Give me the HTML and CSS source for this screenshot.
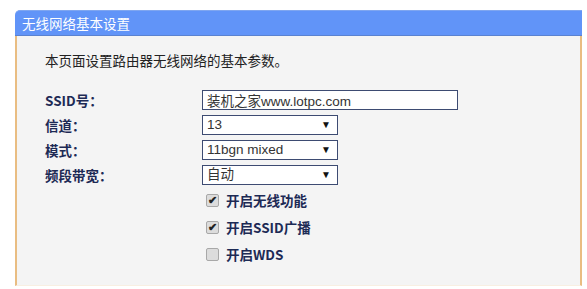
FILE: index.html
```html
<!DOCTYPE html>
<html lang="zh-CN">
<head>
    <meta charset="UTF-8">
    <title>无线网络基本设置</title>
    <link rel="stylesheet" href="styles.css">
</head>
<body>
    <div class="panel">
        <div class="panel-title">无线网络基本设置</div>
        <div class="panel-body">
            <p class="intro">本页面设置路由器无线网络的基本参数。</p>

            <div class="form-row">
                <label>SSID号：</label>
                <input class="text-input" type="text" value="装机之家www.lotpc.com">
            </div>
            <div class="form-row">
                <label>信道：</label>
                <div class="select-box">13<span class="arrow">▼</span></div>
            </div>
            <div class="form-row">
                <label>模式：</label>
                <div class="select-box">11bgn mixed<span class="arrow">▼</span></div>
            </div>
            <div class="form-row">
                <label>频段带宽：</label>
                <div class="select-box">自动<span class="arrow">▼</span></div>
            </div>

            <div class="checks">
                <label class="check"><span class="box checked"></span>开启无线功能</label>
                <label class="check"><span class="box checked"></span>开启SSID广播</label>
                <label class="check"><span class="box"></span>开启WDS</label>
            </div>
        </div>
    </div>
</body>
</html>
```

FILE: styles.css
```css
body {
    margin: 0;
    padding: 10px 5px 0 15px;
    background: #fff;
    font-family: "Noto Sans CJK SC", "Liberation Sans", sans-serif;
    font-size: 13.5px;
    color: #1d2a55;
}
.panel {
    width: 567px;
}
.panel-title {
    height: 26px;
    line-height: 25px;
    padding-left: 7px;
    background: #6194f8;
    border-top: 1px solid #7fa6f0;
    border-bottom: 1px solid #5a82d0;
    border-radius: 5px 0 0 0;
    color: #fff;
    font-size: 13.5px;
    box-sizing: border-box;
}
.panel-body {
    height: 250px;
    background: #f4f4f4;
    border-left: 2px solid #e9bd82;
    border-right: 2px solid #e9bd82;
    border-bottom: 1px solid #f8efe2;
    padding: 15px 0 0 28px;
    box-sizing: border-box;
}
.intro {
    margin: 0 0 18px;
    line-height: 18px;
    color: #222;
}
.form-row {
    display: flex;
    align-items: center;
    height: 25px;
}
.form-row label {
    width: 157px;
    font-weight: bold;
}
.text-input {
    width: 256px;
    height: 20px;
    margin: 0;
    padding: 0 4px;
    border: 1px solid #3d4b72;
    background: #fff;
    font-family: "Liberation Sans", "Noto Sans CJK SC", sans-serif;
    font-size: 13.5px;
    color: #333;
    box-sizing: border-box;
}
.select-box {
    width: 136px;
    height: 20px;
    line-height: 18px;
    padding: 0 4px;
    border: 1px solid #3d4b72;
    background: #fff;
    font-family: "Liberation Sans", "Noto Sans CJK SC", sans-serif;
    color: #333;
    box-sizing: border-box;
    display: flex;
    justify-content: space-between;
}
.arrow {
    font-size: 10px;
    color: #111;
    padding-right: 2px;
}
.checks {
    display: flex;
    flex-direction: column;
    gap: 9px;
    padding: 4px 0 0 161px;
}
.check {
    display: flex;
    align-items: center;
    height: 18px;
    font-weight: bold;
}
.box {
    width: 11px;
    height: 11px;
    margin-right: 7px;
    border: 1px solid #a8a8a8;
    border-radius: 2px;
    background: #dcdcdc;
    position: relative;
}
.box.checked::after {
    content: "✔";
    position: absolute;
    left: 1px;
    top: -4px;
    font-size: 11px;
    color: #222;
}
```
